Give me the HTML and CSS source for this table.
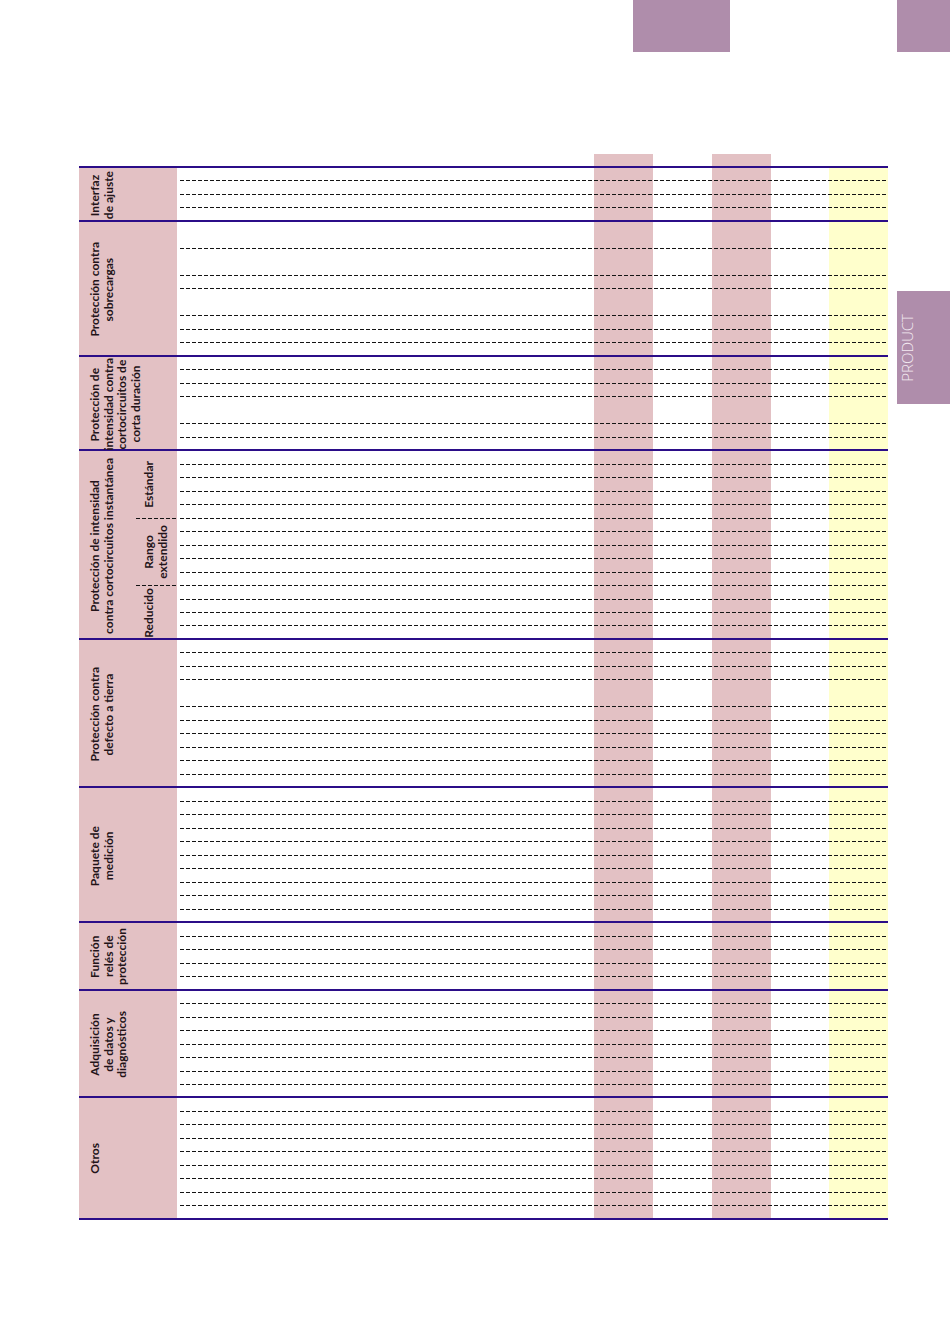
FILE: index.html
```html
<!DOCTYPE html>
<html lang="es">
<head>
<meta charset="utf-8">
<title>Tabla de funciones</title>
<link rel="stylesheet" href="styles.css">
</head>
<body>
<div class="page">
  <div class="main">
    <div class="tabbar"><div class="tab-a"></div></div>
    <div class="colhead"></div>
    <div class="table">
      <section class="sec">
        <div class="hd"><div class="lbl">Interfaz<br>de ajuste</div></div>
        <div class="rows">
          <div class="r"></div><div class="r"></div><div class="r"></div><div class="r"></div>
        </div>
      </section>
      <section class="sec">
        <div class="hd"><div class="lbl">Protección contra<br>sobrecargas</div></div>
        <div class="rows">
          <div class="r x2"></div><div class="r x2"></div><div class="r"></div><div class="r x2"></div><div class="r"></div><div class="r"></div><div class="r"></div>
        </div>
      </section>
      <section class="sec">
        <div class="hd"><div class="lbl">Protección de<br>intensidad contra<br>cortocircuitos de<br>corta duración</div></div>
        <div class="rows">
          <div class="r"></div><div class="r"></div><div class="r"></div><div class="r x2"></div><div class="r"></div><div class="r"></div>
        </div>
      </section>
      <section class="sec">
        <div class="hd split">
          <div class="lbl">Protección de intensidad<br>contra cortocircuitos instantánea</div>
          <div class="subs">
            <div class="sub x5"><div class="lbl sm">Estándar</div></div>
            <div class="sub x5"><div class="lbl sm">Rango<br>extendido</div></div>
            <div class="sub x4"><div class="lbl sm">Reducido</div></div>
          </div>
        </div>
        <div class="rows">
          <div class="r"></div><div class="r"></div><div class="r"></div><div class="r"></div><div class="r"></div>
          <div class="r"></div><div class="r"></div><div class="r"></div><div class="r"></div><div class="r"></div>
          <div class="r"></div><div class="r"></div><div class="r"></div><div class="r"></div>
        </div>
      </section>
      <section class="sec">
        <div class="hd"><div class="lbl">Protección contra<br>defecto a tierra</div></div>
        <div class="rows">
          <div class="r"></div><div class="r"></div><div class="r"></div><div class="r x2"></div><div class="r"></div>
          <div class="r"></div><div class="r"></div><div class="r"></div><div class="r"></div><div class="r"></div>
        </div>
      </section>
      <section class="sec">
        <div class="hd"><div class="lbl">Paquete de<br>medición</div></div>
        <div class="rows">
          <div class="r"></div><div class="r"></div><div class="r"></div><div class="r"></div><div class="r"></div>
          <div class="r"></div><div class="r"></div><div class="r"></div><div class="r"></div><div class="r"></div>
        </div>
      </section>
      <section class="sec">
        <div class="hd"><div class="lbl">Función<br>relés de<br>protección</div></div>
        <div class="rows">
          <div class="r"></div><div class="r"></div><div class="r"></div><div class="r"></div><div class="r"></div>
        </div>
      </section>
      <section class="sec">
        <div class="hd"><div class="lbl">Adquisición<br>de datos y<br>diagnósticos</div></div>
        <div class="rows">
          <div class="r"></div><div class="r"></div><div class="r"></div><div class="r"></div>
          <div class="r"></div><div class="r"></div><div class="r"></div><div class="r"></div>
        </div>
      </section>
      <section class="sec">
        <div class="hd"><div class="lbl">Otros</div></div>
        <div class="rows">
          <div class="r"></div><div class="r"></div><div class="r"></div><div class="r"></div><div class="r"></div>
          <div class="r"></div><div class="r"></div><div class="r"></div><div class="r"></div>
        </div>
      </section>
    </div>
  </div>
  <div class="side">
    <div class="tab-b"></div>
    <div class="tab-p"><span class="tab-text">PRODUCT</span></div>
  </div>
</div>
</body>
</html>
```
FILE: styles.css
```css
:root {
  --s: 13.49px;
  --ink: #2b0d88;
  --pink: #e3c1c4;
  --yel: #ffffcc;
  --pur: #af8dab;
  --dash: repeating-linear-gradient(to right, #141414 0 4px, transparent 4px 6px);
}

html, body {
  margin: 0;
  background: #ffffff;
}

body {
  font-family: Lato, "Open Sans", sans-serif;
  color: #231419;
}

.page {
  display: flex;
  align-items: flex-start;
}

.main {
  margin-left: 79px;
  width: 809px;
}

.tabbar {
  height: 52px;
  display: flex;
}

.tab-a {
  margin-left: 554px;
  width: 97px;
  background: var(--pur);
}

.colhead {
  margin-top: 102px;
  height: 12px;
  background: linear-gradient(to right,
    transparent 0 515px,
    var(--pink) 515px 574px,
    transparent 574px 633px,
    var(--pink) 633px 692px,
    transparent 692px);
}

.table {
  display: flex;
  flex-direction: column;
  background: linear-gradient(to right,
    transparent 0 515px,
    var(--pink) 515px 574px,
    transparent 574px 633px,
    var(--pink) 633px 692px,
    transparent 692px 750px,
    var(--yel) 750px 809px);
}

.sec {
  display: flex;
  border-top: 2px solid var(--ink);
}

.sec + .sec {
  margin-top: -2px;
}

.sec:last-child {
  border-bottom: 2px solid var(--ink);
}

.sec:last-child .r:last-child {
  height: calc(var(--s) - 2px);
}

.hd {
  width: 98px;
  flex: none;
  background: var(--pink);
  display: flex;
  align-items: center;
}

.lbl {
  writing-mode: vertical-rl;
  transform: rotate(180deg);
  text-align: center;
  white-space: nowrap;
  margin-left: 9px;
  font-size: 12px;
  line-height: 13.5px;
  font-weight: 700;
}

.hd.split {
  align-items: stretch;
}

.hd.split > .lbl {
  align-self: center;
}

.subs {
  margin-left: auto;
  width: 41px;
  display: flex;
  flex-direction: column;
}

.sub {
  display: flex;
  align-items: center;
}

.sub .lbl {
  margin-left: 6px;
}

.sub:not(:last-child) {
  background: var(--dash) left bottom / 100% 1px no-repeat;
}

.x4 { height: calc(var(--s) * 4); }
.x5 { height: calc(var(--s) * 5); }

.rows {
  flex: 1;
  display: flex;
  flex-direction: column;
}

.r {
  height: var(--s);
}

.r.x2 {
  height: calc(var(--s) * 2);
}

.r:not(:last-child) {
  background: var(--dash) left 3px bottom / calc(100% - 3px) 1px no-repeat;
}

.side {
  margin-left: 9px;
  width: 53px;
}

.tab-b {
  height: 52px;
  background: var(--pur);
}

.tab-p {
  margin-top: 239px;
  height: 113px;
  background: var(--pur);
  display: flex;
  align-items: center;
}

.tab-text {
  writing-mode: vertical-rl;
  transform: rotate(180deg);
  margin-left: 3px;
  font-family: "Open Sans", Lato, sans-serif;
  font-weight: 300;
  font-size: 15px;
  line-height: 15px;
  color: #f3eaf1;
}
```
